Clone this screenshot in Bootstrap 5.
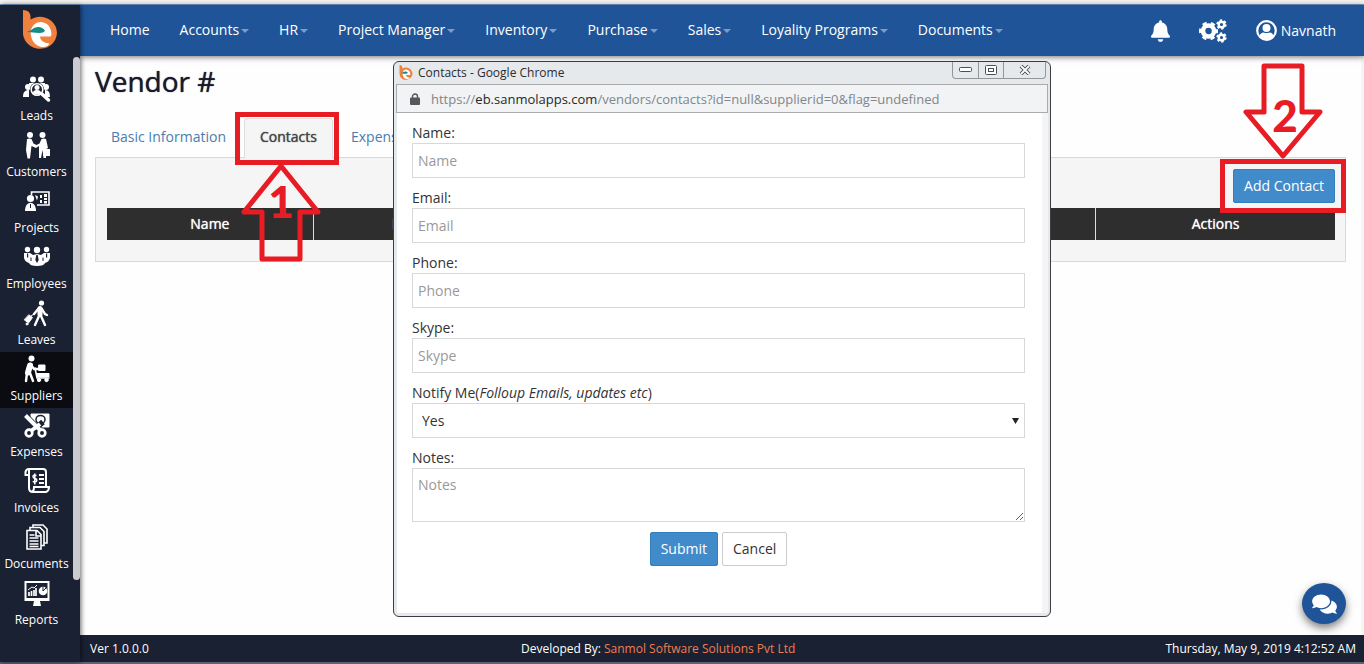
<!DOCTYPE html>
<html lang="en">
<head>
<meta charset="utf-8">
<meta name="viewport" content="width=device-width, initial-scale=1">
<title>Vendor</title>
<link href="https://cdn.jsdelivr.net/npm/bootstrap@5.3.0/dist/css/bootstrap.min.css" rel="stylesheet">
<style>
  :root { --navy: #1a2132; --blue: #1f5598; --red: #e81c24; --btn: #428bca; }
  body { font-family: "Open Sans", "Noto Sans", sans-serif; font-size: 14px; line-height: 20px; color: #333; background: #fefefe; }
  a { text-decoration: none; }
  .top-strip { height: 5px; background: #f5f4f1; border-bottom: 1px solid #7aa0d0; }
  .bottom-strip { height: 2px; background: #5c6376; }

  .side { width: 80px; background: var(--navy); box-shadow: 1px 0 5px rgba(0,0,0,.6); z-index: 2; }
  .side-logo { height: 67px; padding-top: 5px; }
  .side-item { width: 73px; height: 56px; padding-top: 3px; color: #fff; font-size: 12px; font-weight: 500; line-height: 20px; }
  .side-item svg { width: 28px; height: 28px; margin-bottom: 3px; }
  .side-item.active { background: #0a0c11; }
  .side-thumb { right: 0; top: 52px; width: 7px; height: 523px; border-radius: 4px; background: #cbcbd0; }

  .topbar { background: var(--blue); height: 51px; box-shadow: 0 1px 6px rgba(0,0,0,.55); padding: 0 28px 0 15px; z-index: 1; }
  .topbar .nav-link { color: #fff; padding: 14px 15px 16px; line-height: 20px; font-weight: 500; }
  .topbar .dropdown-toggle::after { margin-left: 2px; vertical-align: 2px; border-top: 4px solid #7c9bc6; border-left: 4px solid transparent; border-right: 4px solid transparent; }
  .tools { gap: 29px; }
  .tools a { color: #fff; }

  .page { padding: 9px 15px 0; border-right: 3px solid #f5f5f5; }
  .page h1 { font-size: 28px; line-height: 32px; font-weight: 500; color: #1a1a2b; margin-bottom: 21px; text-shadow: 0 0 1px currentColor; }
  .tabs { border: 0; gap: 2px; }
  .tabs .nav-link { border-radius: 4px 4px 0 0; padding: 8px 15px 11px; color: #4a7dae; line-height: 20px; height: 41px; }
  .tabs .nav-link.active { background: #f5f5f5; border-color: #ddd #ddd #f5f5f5; color: #444; }
  .faux { text-shadow: 0 0 1px currentColor; }
  .panel { background: #f5f5f5; border: 1px solid #d9d9d9; padding: 11px 10px 21px 11px; margin-top: -1px; }
  .btn { --bs-btn-border-radius: 2px; font-size: 14px; line-height: 20px; padding: 6px 10px; }
  .btn-blue { color: #fff; background: var(--btn); border-color: #357ebd; }
  .btn-plain { color: #333; background: #fff; border-color: #ccc; }
  .grid-table { margin: 5px 0 0; table-layout: fixed; }
  .grid-table th { background: #2e2e2e; color: #fff; padding: 6px; font-weight: 400; text-align: center; border: 0; border-right: 1px solid #ddd; box-shadow: none; }
  .grid-table th:last-child { border-right: 0; }
  .grid-table td { background: #2e2e2e; padding: 0; border: 0; border-right: 1px solid #ddd; box-shadow: none; }

  .mark-box { border: 5px solid var(--red); pointer-events: none; z-index: 5; }
  .box-tab { inset: -6px -6px -7px -9px; }
  .box-btn { inset: -10px -11px -10px -13px; }
  .arrow { width: 82px; height: 102px; left: 50%; margin-left: -41px; z-index: 5; pointer-events: none; color: var(--red); }
  .arrow svg { width: 82px; height: 102px; display: block; }
  .arrow-up { top: 100%; margin-left: -47px; }
  .arrow-down { bottom: 100%; }
  .arrow span { font-family: Lato, sans-serif; font-weight: 900; font-size: 44px; line-height: 44px; left: 0; right: 0; }
  .arrow-up span { top: 19px; }
  .arrow-down span { top: 31px; left: 4px; }

  .popup { left: 393px; top: 61px; width: 658px; border: 1px solid #3c3d42; border-radius: 6px; background: #e6e9ec; z-index: 4; padding: 0 2px 3px; }
  .pop-title { height: 22px; padding-left: 3px; font-size: 12px; gap: 5px; color: #2c2c2c; }
  .win-btns { height: 17px; margin-right: 2px; border: 1px solid #92969b; border-top: 0; border-radius: 0 0 4px 4px; align-self: flex-start; }
  .win-btns button { border: 0; background: none; padding: 0; height: 16px; width: 25px; display: flex; align-items: center; justify-content: center; color: #4b4e54; }
  .win-btns button + button { border-left: 1px solid #92969b; }
  .win-btns button:last-child { width: 42px; }
  .pop-url { height: 29px; background: #f1f3f4; border: 1px solid #a9abad; padding-left: 13px; gap: 11px; color: #80868b; font-size: 13px; }
  .pop-url b { font-weight: 400; color: #26282b; }
  .pop-body { background: #fff; margin-left: 1px; border-right: 6px solid #f4f4f4; padding: 10px 17px 47px 15px; }
  .pop-body label { line-height: 20px; display: block; }
  .pop-body .form-control, .pop-body .form-select { border-radius: 0; border: 1px solid #d8d8d8; font-size: 14px; line-height: 20px; height: 35px; padding: 6px 5px; color: #333; margin-bottom: 10px; background-color: #fff; }
  .pop-body .form-control::placeholder { color: #999; }
  .pop-body .form-select { padding-left: 9px; background-size: 7px 6px; background-position: right 5px center; background-image: url("data:image/svg+xml,%3Csvg xmlns='http://www.w3.org/2000/svg' viewBox='0 0 7 6'%3E%3Cpath fill='%23222' d='M0 0h7L3.500 6z'/%3E%3C/svg%3E"); }
  .pop-body textarea.form-control { height: 54px; min-height: 54px; resize: vertical; }

  .foot { background: var(--navy); color: #fff; font-size: 12px; line-height: 27px; font-weight: 500; }
  .foot .col-4 { padding: 0 8px 0 10px; }
  .foot .maker { padding-left: 13px; }
  .foot a { color: #ee7e52; }
  .chat { width: 44px; height: 41px; border-radius: 50%; right: 18px; bottom: 40px; background: var(--blue); color: #fff; border: 0; box-shadow: 0 4px 8px rgba(0,0,0,.5); padding: 0; z-index: 3; }
</style>
</head>
<body class="d-flex flex-column min-vh-100 position-relative">

<svg width="0" height="0" class="position-absolute" aria-hidden="true">
  <symbol id="logo" viewBox="0 0 36 42">
    <path fill="#f0803c" d="M1 0q7 0 7.500 6v3.500A17 16 0 1 1 1 24z"/>
    <path fill="#fff" d="M8.500 21Q11 12 19 12q10 1 10.500 13l-1 1.500H18q0 6 9.500 7-2 4-8 3.500Q9 35 8.500 21z"/>
    <path fill="#168a83" d="M5 22q4-1.500 7-4 7-3 11 2.500-1 2.500-6 2.500z"/>
  </symbol>
</svg>

<div class="top-strip"></div>
<div class="d-flex flex-grow-1">

  <nav class="side position-relative flex-shrink-0" aria-label="Modules">
    <div class="side-logo text-center"><a href="#" aria-label="Dashboard"><svg width="36" height="42"><use href="#logo"/></svg></a></div>
    <a href="#" class="side-item d-flex flex-column align-items-center">
      <svg viewBox="0 0 28 28" fill="#fff"><circle cx="10" cy="4.500" r="3"/><circle cx="18" cy="4.500" r="3"/><circle cx="5" cy="12" r="3"/><circle cx="23" cy="12" r="3"/><path d="M0 22c0-5 2-7 6-7v7zM22 15c4 0 5 3 5 7h-5zM6 8h16v5H6z"/><circle cx="14" cy="14.500" r="7" fill="#1a2132"/><circle cx="14" cy="14.500" r="5.800" fill="none" stroke="#fff" stroke-width="1.600"/><circle cx="14" cy="12.500" r="2.500"/><path d="M10 18q0-3 4-3t4 3q-4 3-8 0z"/><path d="M19 19l6.500 6" stroke="#fff" stroke-width="3.500" stroke-linecap="round"/></svg>Leads</a>
    <a href="#" class="side-item d-flex flex-column align-items-center">
      <svg viewBox="0 0 28 28" fill="#fff"><circle cx="7" cy="4" r="3"/><circle cx="19.500" cy="4" r="3"/><path d="M4 8q3-1 4.500 0l2 4.500 3 1.500 3-1.500 2-4.500q2-1 4.500 0l2 9-2 1v9h-2.500l-1-8-1.500 8h-2V15l-3 2-4.500-2-.500 4-1 8.500H4.500L3 19z"/><path d="M20 18h7v7h-7z"/></svg>Customers</a>
    <a href="#" class="side-item d-flex flex-column align-items-center">
      <svg viewBox="0 0 28 28" fill="#fff"><path d="M8.500 8V5H26v13H14" fill="none" stroke="#fff" stroke-width="1.600"/><circle cx="7.500" cy="11.500" r="3.600"/><path d="M2 24c0-11 11-11 11 0z"/><path d="M12 8l3 1.500-1 4zM17 8h2v3h-2zM17 13h2v3h-2zM21 7h3v3h-3zM21 11h3v2h-3zM21 14h3v2.500h-3z"/><path d="M7.500 17v4" stroke="#1a2132"/></svg>Projects</a>
    <a href="#" class="side-item d-flex flex-column align-items-center">
      <svg viewBox="0 0 28 28" fill="#fff"><circle cx="4.500" cy="6.500" r="2.700"/><circle cx="14" cy="7" r="3.200"/><circle cx="23.500" cy="6.500" r="2.700"/><path d="M1 10h6l3 2 4-1 4 1 3-2h6v5q-1 4-5 5-1 3-8 3t-8-3q-4-1-5-5z"/><path d="M13.300 12h1.400l1 5-1.700 3-1.700-3zM4 10.500h1.200v4H4zM23 10.500h1.200v4H23z" fill="#1a2132"/><path d="M8 14.500v3.500M20 14.500v3.500" stroke="#1a2132"/></svg>Employees</a>
    <a href="#" class="side-item d-flex flex-column align-items-center">
      <svg viewBox="0 0 28 28" fill="none" stroke="#fff" stroke-linecap="round"><circle cx="18.500" cy="4" r="2.600" fill="#fff" stroke="none"/><path d="M17 9.500v6" stroke-width="5"/><path d="M16 9l-5 6M19 10l3 5 2 1M16 17l-4 9M18 17l4 9" stroke-width="2.400"/><path d="M6 16l3.500 2.500-4 5.500-4-3z" fill="#fff" stroke-width="1"/><circle cx="4" cy="25" r="1" fill="#fff"/><path d="M8 17l3-2"/></svg>Leaves</a>
    <a href="#" class="side-item active d-flex flex-column align-items-center">
      <svg viewBox="0 0 28 28" fill="none" stroke="#fff" stroke-linecap="round"><circle cx="8.500" cy="3.500" r="3" fill="#fff" stroke="none"/><path d="M7 10.500l-2 7" stroke-width="6"/><path d="M8 10l3 4h4M4 18l-1 8M7 18l3 8" stroke-width="2.400"/><path d="M14 18.500h12v3.500H14zM16 10h6v5.500h-6z" fill="#fff"/><path d="M12 13l2 10h12" stroke-width="1.600"/><circle cx="16" cy="25" r="1.700" fill="#fff"/><circle cx="23.500" cy="25" r="1.700" fill="#fff"/></svg>Suppliers</a>
    <a href="#" class="side-item d-flex flex-column align-items-center">
      <svg viewBox="0 0 28 28" fill="none" stroke="#fff"><path d="M8 3h18v13h-8L8 8z" fill="#fff"/><ellipse cx="17.500" cy="8.500" rx="4.500" ry="4" fill="#fff" stroke="#1a2132" stroke-width="1.500"/><path d="M3 5l15 15M20 11L9 20" stroke="#1a2132" stroke-width="5.500"/><path d="M2.500 4.500l15 15" stroke-width="4"/><path d="M17 13l-9 7" stroke-width="4"/><circle cx="6" cy="22" r="3.300" stroke-width="2.700"/><circle cx="19" cy="22" r="3.300" stroke-width="2.700"/></svg>Expenses</a>
    <a href="#" class="side-item d-flex flex-column align-items-center">
      <svg viewBox="0 0 28 28" fill="none" stroke="#fff" stroke-width="2"><path d="M6 8H2.500V5Q3 2 6 2h14q3 0 3 3v15M6 3v18q0 4 4 4h13q3-1 3-5H11q0 5-3 5"/><path d="M16 8h5M16 12h5M16 16h5" stroke-width="1.800"/><path d="M13.500 8.500q-3.500-1-3.500 1 0 1.500 2 2t1.700 2q0 2-4 1M11.800 6.500v11" stroke-width="1.500"/></svg>Invoices</a>
    <a href="#" class="side-item d-flex flex-column align-items-center">
      <svg viewBox="0 0 28 28" fill="none" stroke="#fff" stroke-width="1.600"><path d="M10 4V2h10l4 4v14h-3M7 7V4.500h10l4 4v14h-3"/><path d="M4 7.500h10l4 4V26H4z"/><path d="M13 8v5h5"/><path d="M6.500 12h5M6.500 15h9M6.500 18h9M6.500 21h9M6.500 23.500h9" stroke-width="1.500"/></svg>Documents</a>
    <a href="#" class="side-item d-flex flex-column align-items-center">
      <svg viewBox="0 0 28 28" fill="none" stroke="#fff"><path d="M2.500 3h23v18h-23z" stroke-width="2"/><path d="M2 19h24v3H2zM11 22h6l1 5h-8z" fill="#fff" stroke="none"/><path d="M6 17v-4M8.500 17v-5M11 17v-6M13 17V9" stroke-width="1.700"/><path d="M5 11l4-3 2 1 3-3"/><circle cx="20" cy="12" r="4.300" fill="#fff" stroke="none"/><path d="M20 8v4l3-3" stroke="#1a2132"/></svg>Reports</a>
    <div class="side-thumb position-absolute"></div>
  </nav>

  <div class="d-flex flex-column flex-grow-1">
    <header class="topbar position-relative d-flex justify-content-between align-items-center">
      <ul class="nav flex-nowrap">
        <li class="nav-item"><a class="nav-link" href="#">Home</a></li>
        <li class="nav-item"><a class="nav-link dropdown-toggle" href="#">Accounts</a></li>
        <li class="nav-item"><a class="nav-link dropdown-toggle" href="#">HR</a></li>
        <li class="nav-item"><a class="nav-link dropdown-toggle" href="#">Project Manager</a></li>
        <li class="nav-item"><a class="nav-link dropdown-toggle" href="#">Inventory</a></li>
        <li class="nav-item"><a class="nav-link dropdown-toggle" href="#">Purchase</a></li>
        <li class="nav-item"><a class="nav-link dropdown-toggle" href="#">Sales</a></li>
        <li class="nav-item"><a class="nav-link dropdown-toggle" href="#">Loyality Programs</a></li>
        <li class="nav-item"><a class="nav-link dropdown-toggle" href="#">Documents</a></li>
      </ul>
      <div class="tools d-flex align-items-center">
        <a href="#" aria-label="Notifications"><svg class="d-block" width="19" height="22" viewBox="0 0 448 512" fill="#fff"><path d="M224 512c35.320 0 63.970-28.650 63.970-64H160.030c0 35.350 28.650 64 63.970 64zm215.390-149.710c-19.320-20.760-55.470-51.990-55.470-154.290 0-77.700-54.480-139.900-127.940-155.160V32c0-17.670-14.320-32-31.980-32s-31.980 14.330-31.980 32v20.840C118.560 68.100 64.080 130.300 64.080 208c0 102.300-36.150 133.530-55.470 154.290-6 6.450-8.660 14.160-8.610 21.710.11 16.400 12.980 32 32.100 32h383.800c19.120 0 32-15.600 32.100-32 .05-7.550-2.610-15.270-8.610-21.710z"/></svg></a>
        <a href="#" aria-label="Settings"><svg class="d-block" width="28" height="24" viewBox="0 0 28 24" fill="none" stroke="#fff"><circle cx="9.500" cy="12" r="5.500" stroke-width="4.500"/><circle cx="9.500" cy="12" r="8" stroke-width="3" stroke-dasharray="4.200 4.178" stroke-dashoffset="2.100"/><circle cx="22.500" cy="5.500" r="2.800" stroke-width="2.400"/><circle cx="22.500" cy="5.500" r="4.300" stroke-width="1.800" stroke-dasharray="2.250 2.253"/><circle cx="22.500" cy="18.500" r="2.800" stroke-width="2.400"/><circle cx="22.500" cy="18.500" r="4.300" stroke-width="1.800" stroke-dasharray="2.250 2.253"/></svg></a>
        <a href="#" class="d-flex align-items-center gap-1"><svg width="21" height="21" viewBox="0 0 21 21"><circle cx="10.500" cy="10.500" r="9.300" fill="none" stroke="#fff" stroke-width="2.200"/><circle cx="10.500" cy="8" r="4" fill="#fff"/><path d="M3.500 16q1-3.500 4-3.500 3 1.200 6 0 3 0 4 3.500-3 3.500-7 3.500t-7-3.500z" fill="#fff"/></svg>Navnath</a>
      </div>
    </header>

    <main class="page flex-grow-1">
      <h1>Vendor #</h1>
      <ul class="nav nav-tabs tabs">
        <li class="nav-item"><a class="nav-link" href="#">Basic Information</a></li>
        <li class="nav-item position-relative"><a class="nav-link active" href="#"><span class="faux">Contacts</span></a>
          <div class="mark-box box-tab position-absolute"><div class="arrow arrow-up position-absolute text-center">
            <svg viewBox="0 0 82 102" fill="none" stroke="#e81c24" stroke-width="5" stroke-linejoin="round"><path d="M41 6L4 52H22V99H60V52H78z"/></svg>
            <span class="position-absolute">1</span></div></div>
        </li>
        <li class="nav-item"><a class="nav-link" href="#">Expenses</a></li>
      </ul>
      <section class="panel">
        <div class="d-flex justify-content-end"><div class="position-relative">
          <button type="button" class="btn btn-blue d-block">Add Contact</button>
          <div class="mark-box box-btn position-absolute"><div class="arrow arrow-down position-absolute text-center">
            <svg viewBox="0 0 82 102" fill="none" stroke="#e81c24" stroke-width="5" stroke-linejoin="round"><path d="M41 94L4 50H22V4H60V50H78z"/></svg>
            <span class="position-absolute">2</span></div></div>
        </div></div>
        <table class="table grid-table">
          <colgroup><col style="width:16.800%"><col style="width:15.700%"><col><col style="width:19.500%"></colgroup>
          <thead><tr><th scope="col"><span class="faux">Name</span></th><th scope="col"><span class="faux">Email</span></th><td></td><th scope="col"><span class="faux">Actions</span></th></tr></thead>
        </table>
      </section>
    </main>

    <footer class="foot">
      <div class="row g-0">
        <div class="col-4">Ver 1.0.0.0</div>
        <div class="col-4 maker">Developed By: <a href="#">Sanmol Software Solutions Pvt Ltd</a></div>
        <div class="col-4 text-end">Thursday, May 9, 2019 4:12:52 AM</div>
      </div>
    </footer>
  </div>
</div>
<div class="bottom-strip"></div>

<section class="popup position-absolute" aria-label="Contacts window">
  <div class="pop-title d-flex align-items-center">
    <svg width="14" height="16"><use href="#logo"/></svg><span class="me-auto">Contacts - Google Chrome</span>
    <div class="win-btns d-flex">
      <button type="button" aria-label="Minimize"><svg width="13" height="6" fill="#fff" stroke="currentColor"><rect x=".5" y=".5" width="12" height="4" rx="1"/></svg></button>
      <button type="button" aria-label="Maximize"><svg width="12" height="10" fill="#fff" stroke="currentColor"><rect x=".5" y=".5" width="11" height="9" rx="1"/><rect x="3.500" y="3.500" width="5" height="3"/></svg></button>
      <button type="button" aria-label="Close"><svg width="12" height="10" viewBox="0 0 12 10"><path d="M2 1l8 8M10 1L2 9" stroke="currentColor" stroke-width="3.800"/><path d="M2 1l8 8M10 1L2 9" stroke="#fff" stroke-width="1.800"/></svg></button>
    </div>
  </div>
  <div class="pop-url d-flex align-items-center">
    <svg width="10" height="12" viewBox="0 0 10 12"><rect y="4.500" width="10" height="7.500" rx="1" fill="#55585c"/><path d="M2.500 5V3.500a2.500 2.500 0 0 1 5 0V5" fill="none" stroke="#55585c" stroke-width="1.400"/></svg>
    <span>https://<b>eb.sanmolapps.com</b>/vendors/contacts?id=null&amp;supplierid=0&amp;flag=undefined</span>
  </div>
  <form class="pop-body">
    <label for="f-name">Name:</label><input id="f-name" class="form-control" placeholder="Name">
    <label for="f-email">Email:</label><input id="f-email" type="email" class="form-control" placeholder="Email">
    <label for="f-phone">Phone:</label><input id="f-phone" class="form-control" placeholder="Phone">
    <label for="f-skype">Skype:</label><input id="f-skype" class="form-control" placeholder="Skype">
    <label for="f-notify">Notify Me(<i>Folloup Emails, updates etc</i>)</label><select id="f-notify" class="form-select"><option>Yes</option></select>
    <label for="f-notes">Notes:</label><textarea id="f-notes" class="form-control" placeholder="Notes"></textarea>
    <div class="d-flex justify-content-center gap-1">
      <button type="submit" class="btn btn-blue">Submit</button>
      <button type="button" class="btn btn-plain">Cancel</button>
    </div>
  </form>
</section>

<button type="button" class="chat position-absolute d-flex align-items-center justify-content-center" aria-label="Chat"><svg width="25" height="22" viewBox="0 0 576 512" fill="#fff"><path d="M416 192c0-88.400-93.100-160-208-160S0 103.600 0 192c0 34.300 14.100 65.900 38 92-13.400 30.200-35.500 54.200-35.800 54.500-2.200 2.300-2.800 5.700-1.500 8.700S4.800 352 8 352c36.600 0 66.900-12.300 88.700-25 32.200 15.700 70.300 25 111.300 25 114.900 0 208-71.600 208-160zm122 220c23.900-26 38-57.700 38-92 0-66.900-53.500-124.200-129.300-148.100.9 6.600 1.300 13.300 1.300 20.100 0 105.900-107.700 192-240 192-10.800 0-21.300-.8-31.700-1.900C207.800 439.600 281.800 480 368 480c41 0 79.100-9.200 111.300-25 21.800 12.700 52.100 25 88.700 25 3.200 0 6.100-1.900 7.300-4.800 1.300-2.900.7-6.300-1.500-8.700-.3-.3-22.400-24.200-35.800-54.500z"/></svg></button>

<script src="https://cdn.jsdelivr.net/npm/bootstrap@5.3.0/dist/js/bootstrap.bundle.min.js"></script>
</body>
</html>
